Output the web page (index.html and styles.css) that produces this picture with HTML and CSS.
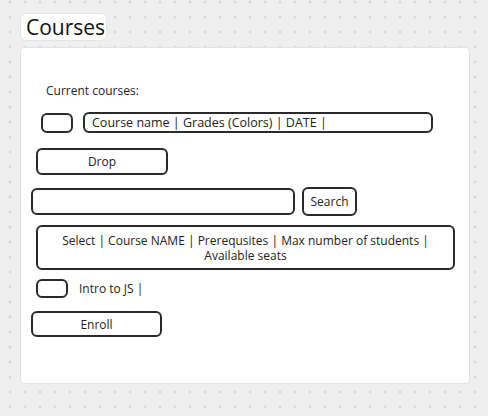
FILE: index.html
```html
<!DOCTYPE html>
<html>
<head>
<meta charset="utf-8">
<link rel="stylesheet" href="styles.css">
</head>
<body>
<div class="page">
  <div class="title">Courses</div>
  <div class="card">
    <div class="label">Current courses:</div>
    <div class="row row-current">
      <div class="check"></div>
      <div class="field course-line">Course name | Grades (Colors) | DATE |</div>
    </div>
    <div class="btn btn-drop">Drop</div>
    <div class="row row-search">
      <div class="field search-input"></div>
      <div class="btn btn-search">Search</div>
    </div>
    <div class="field table-head">
      <div class="head-line">Select | Course NAME | Prerequsites | Max number of students |</div>
      <div class="head-line">Available seats</div>
    </div>
    <div class="row row-intro">
      <div class="check check-small"></div>
      <div class="intro">Intro to JS |</div>
    </div>
    <div class="btn btn-enroll">Enroll</div>
  </div>
</div>
</body>
</html>
```

FILE: styles.css
```css
html, body {
  margin: 0;
  padding: 0;
}
body {
  width: 488px;
  height: 416px;
  background-color: #efefef;
  background-image: radial-gradient(circle, #c6c6c6 0.9px, transparent 1.3px);
  background-size: 15px 15px;
  background-position: 2.5px -5.5px;
  font-family: "Open Sans", "Noto Sans", sans-serif;
  color: #222;
  overflow: hidden;
}
.page {
  padding: 13px 0 0 20px;
}
.title {
  display: inline-block;
  box-sizing: border-box;
  width: 87px;
  height: 28px;
  padding: 0 0 0 5px;
  background: #fff;
  border: 1px solid #e4e4e4;
  border-radius: 6px;
  font-size: 21px;
  line-height: 26px;
  color: #111;
}
.card {
  box-sizing: border-box;
  margin-top: 6px;
  width: 450px;
  height: 337px;
  background: #fff;
  border: 1px solid #e2e2e2;
  border-radius: 4px;
  padding: 34px 0 0 0;
  display: flex;
  flex-direction: column;
  align-items: flex-start;
  font-size: 12px;
}
.label {
  margin-left: 25px;
  line-height: 17px;
}
.row {
  display: flex;
  align-items: center;
}
.check {
  box-sizing: border-box;
  width: 32px;
  height: 20px;
  border: 2px solid #2a2a2a;
  border-radius: 6px;
}
.field, .btn {
  box-sizing: border-box;
  border: 2px solid #2a2a2a;
  border-radius: 6px;
}
.row-current {
  margin-top: 13px;
  margin-left: 20px;
}
.course-line {
  margin-left: 10px;
  width: 350px;
  height: 21px;
  line-height: 17px;
  padding-left: 7px;
  font-size: 12.5px;
}
.btn {
  display: flex;
  align-items: center;
  justify-content: center;
}
.btn-drop {
  margin-top: 15px;
  margin-left: 15px;
  width: 132px;
  height: 27px;
}
.row-search {
  margin-top: 12px;
  margin-left: 10px;
}
.search-input {
  width: 264px;
  height: 27px;
}
.btn-search {
  margin-left: 7px;
  width: 55px;
  height: 29px;
}
.table-head {
  margin-top: 9px;
  margin-left: 15px;
  width: 419px;
  height: 45px;
  text-align: center;
  padding-top: 6px;
}
.head-line {
  line-height: 15px;
}
.row-intro {
  margin-top: 9px;
  margin-left: 15px;
}
.check-small {
  height: 19px;
}
.intro {
  margin-left: 11px;
  line-height: 17px;
}
.btn-enroll {
  margin-top: 13px;
  margin-left: 10px;
  width: 131px;
  height: 26px;
}
```
